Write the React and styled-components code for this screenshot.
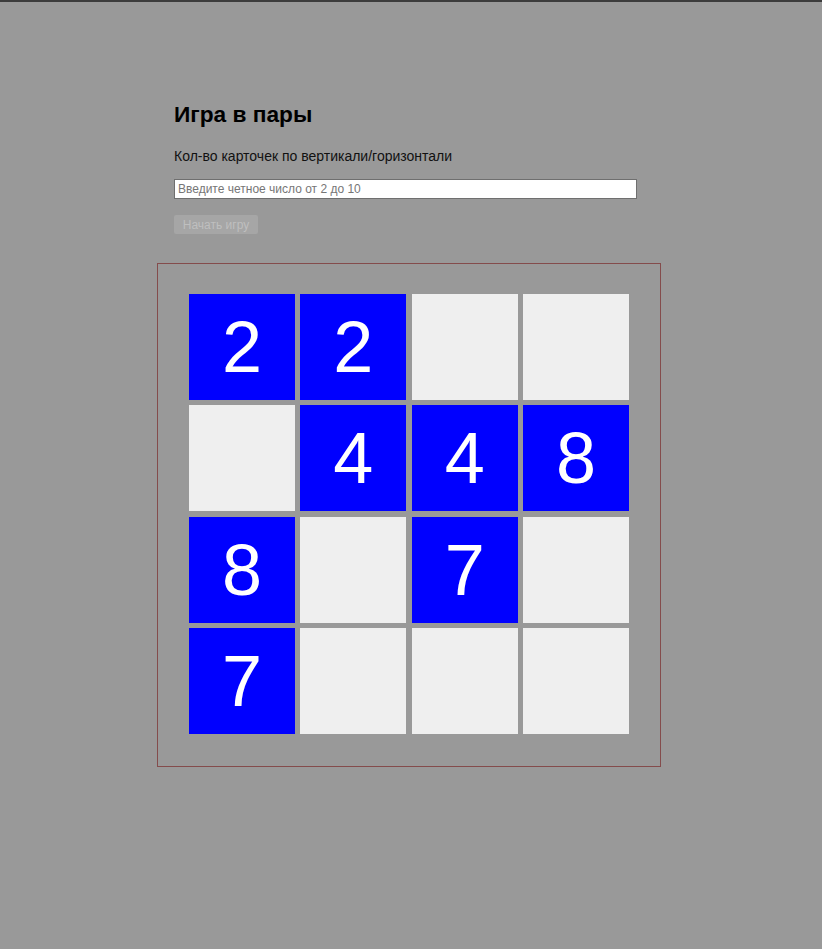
import styled, { createGlobalStyle } from "styled-components";

const GlobalStyle = createGlobalStyle`
  * {
    box-sizing: border-box;
  }
  html, body {
    margin: 0;
    padding: 0;
    background: #999999;
    font-family: "Liberation Sans", Arial, sans-serif;
  }
`;

const Page = styled.div`
  min-height: 949px;
  border-top: 2px solid #3c3c3c;
  padding: 100px 0 0 157px;
`;

const Form = styled.div`
  padding-left: 17px;
  display: flex;
  flex-direction: column;
  align-items: flex-start;
`;

const Title = styled.h1`
  margin: 0 0 21px;
  font-size: 22.7px;
  line-height: 25px;
  font-weight: 700;
  color: #000;
`;

const Label = styled.label`
  font-size: 14px;
  color: #111;
  margin-bottom: 15px;
`;

const Input = styled.input`
  width: 463px;
  height: 20px;
  margin: 0 0 16px;
  padding: 0 3px;
  border: 1px solid #6f6f6f;
  background: #fff;
  font-family: "Liberation Sans", Arial, sans-serif;
  font-size: 12px;
  outline: none;

  &::placeholder {
    color: #767676;
  }
`;

const StartButton = styled.button`
  width: 84px;
  height: 19px;
  padding: 0;
  border: none;
  border-radius: 2px;
  background: #a6a6a6;
  color: #bfbfbf;
  font-family: "Liberation Sans", Arial, sans-serif;
  font-size: 12px;
`;

const Board = styled.div`
  margin-top: 29px;
  width: 504px;
  padding: 30px 31px 32px 31px;
  border: 1px solid #844c4c;
  display: grid;
  grid-template-columns: repeat(4, 106px);
  grid-auto-rows: 106px;
  gap: 5.33px;
`;

const Card = styled.div`
  display: flex;
  align-items: center;
  justify-content: center;
  background: ${(props) => (props.$open ? "#0000ff" : "#efefef")};
  color: #fff;
  font-size: 72px;
  line-height: 1;
  font-family: "Liberation Sans", Arial, sans-serif;
`;

const cards = [2, 2, null, null, null, 4, 4, 8, 8, null, 7, null, 7, null, null, null];

export default function App() {
  return (
    <>
      <GlobalStyle />
      <Page>
        <Form>
          <Title>Игра в пары</Title>
          <Label>Кол-во карточек по вертикали/горизонтали</Label>
          <Input placeholder="Введите четное число от 2 до 10" />
          <StartButton disabled>Начать игру</StartButton>
        </Form>
        <Board>
          {cards.map((value, i) => (
            <Card key={i} $open={value !== null}>
              {value}
            </Card>
          ))}
        </Board>
      </Page>
    </>
  );
}
